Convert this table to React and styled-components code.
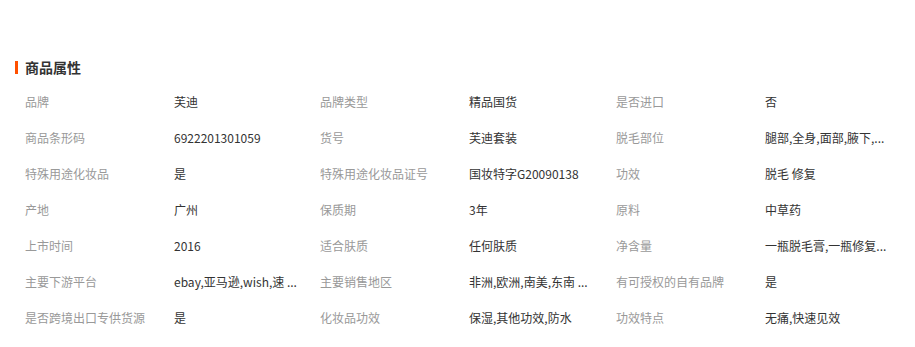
import React from "react";
import styled, { createGlobalStyle } from "styled-components";

const GlobalStyle = createGlobalStyle`
  body {
    margin: 0;
    background: #ffffff;
    font-family: "Microsoft YaHei", "Noto Sans CJK SC", "Liberation Sans", sans-serif;
  }
`;

const Section = styled.div`
  width: 915px;
  padding-top: 58px;
`;

const Title = styled.div`
  display: flex;
  align-items: center;
  gap: 7px;
  padding-left: 15px;
  height: 18px;
  font-size: 14px;
  font-weight: 700;
  color: #333333;
  line-height: 18px;
`;

const Bar = styled.span`
  display: block;
  width: 3px;
  height: 13px;
  background: #ff5000;
`;

const Grid = styled.div`
  display: grid;
  grid-template-columns: 149px 146px 149px 147px 149px 150px;
  padding-left: 25px;
  margin-top: 7px;
`;

const Cell = styled.div`
  height: 36px;
  display: flex;
  align-items: center;
  font-size: 12px;
  color: ${(p) => (p.$label ? "#999999" : "#333333")};
  white-space: nowrap;
`;

// values are shown as the page shows them, already shortened with "..."
const rows = [
  ["品牌", "芙迪", "品牌类型", "精品国货", "是否进口", "否"],
  ["商品条形码", "6922201301059", "货号", "芙迪套装", "脱毛部位", "腿部,全身,面部,腋下,..."],
  ["特殊用途化妆品", "是", "特殊用途化妆品证号", "国妆特字G20090138", "功效", "脱毛 修复"],
  ["产地", "广州", "保质期", "3年", "原料", "中草药"],
  ["上市时间", "2016", "适合肤质", "任何肤质", "净含量", "一瓶脱毛膏,一瓶修复..."],
  ["主要下游平台", "ebay,亚马逊,wish,速 ...", "主要销售地区", "非洲,欧洲,南美,东南 ...", "有可授权的自有品牌", "是"],
  ["是否跨境出口专供货源", "是", "化妆品功效", "保湿,其他功效,防水", "功效特点", "无痛,快速见效"],
];

export default function App() {
  return (
    <Section>
      <GlobalStyle />
      <Title>
        <Bar />
        商品属性
      </Title>
      <Grid>
        {rows.flatMap((row, r) =>
          row.map((text, i) => (
            <Cell key={`${r}-${i}`} $label={i % 2 === 0}>
              {text}
            </Cell>
          ))
        )}
      </Grid>
    </Section>
  );
}
